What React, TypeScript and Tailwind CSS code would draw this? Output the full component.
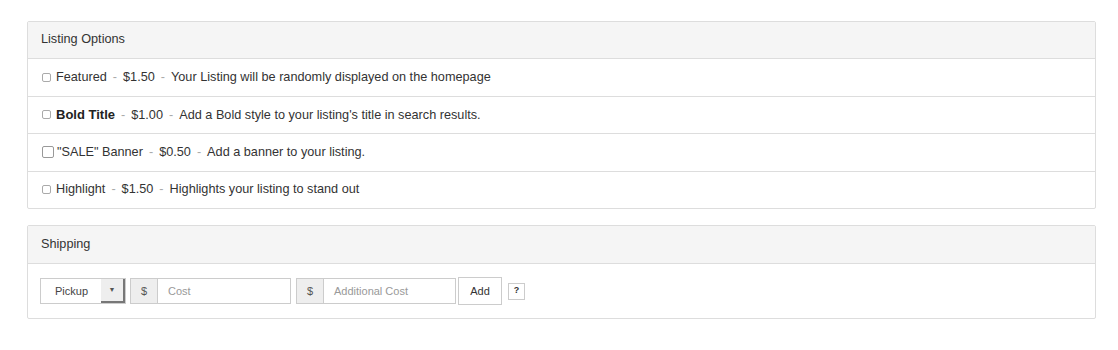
import React from "react";

const Sep = () => <span className="text-[#aaa] mx-[6px]">-</span>;

function Row({ children, big = false }: { children: React.ReactNode; big?: boolean }) {
  return (
    <div className="h-[37.5px] flex items-center px-[14px] border-t border-[#ddd]">
      <span
        className={
          big
            ? "w-[12px] h-[12px] border border-[#999] rounded-[2px] bg-white mr-[3px] shrink-0"
            : "w-[9px] h-[9px] border border-[#aaa] rounded-[2px] bg-white mr-[5px] shrink-0"
        }
      />
      <span className="whitespace-pre">{children}</span>
    </div>
  );
}

export default function App() {
  return (
    <div
      className="w-[1118px] h-[350px] bg-white text-[#333] text-[12.7px] pt-[21px] pl-[27px]"
      style={{ fontFamily: '"Liberation Sans", Arial, sans-serif' }}
    >
      <div className="w-[1069px] border border-[#ddd] rounded-[2px]">
        <div className="h-[36px] bg-[#f5f5f5] flex items-center px-[13px]">Listing Options</div>
        <Row>
          Featured<Sep />$1.50<Sep />Your Listing will be randomly displayed on the homepage
        </Row>
        <Row>
          <span className="font-bold text-[#222] text-[13px]">Bold Title</span>
          <Sep />$1.00<Sep />Add a Bold style to your listing's title in search results.
        </Row>
        <Row big>
          "SALE" Banner<Sep />$0.50<Sep />Add a banner to your listing.
        </Row>
        <Row>
          Highlight<Sep />$1.50<Sep />Highlights your listing to stand out
        </Row>
      </div>

      <div className="w-[1069px] mt-[16px] border border-[#ddd] rounded-[2px]">
        <div className="h-[38px] bg-[#f5f5f5] flex items-center px-[13px] border-b border-[#ddd]">
          Shipping
        </div>
        <div className="h-[54px] flex items-center px-[12px] text-[11px]">
          <div className="flex h-[26px] w-[86px] border border-[#ccc] bg-white">
            <div className="flex-1 flex items-center pl-[14px] text-[#444]">Pickup</div>
            <div className="w-[24px] bg-[#eee] border-r-2 border-b-2 border-[#777] flex items-center justify-center text-[7px] text-[#555]">
              ▼
            </div>
          </div>
          <div className="flex h-[26px] ml-[4px] border border-[#ccc]">
            <div className="w-[27px] bg-[#eee] border-r border-[#ccc] flex items-center justify-center text-[#555]">
              $
            </div>
            <div className="w-[132px] bg-white flex items-center pl-[10px] text-[#999]">Cost</div>
          </div>
          <div className="flex h-[26px] ml-[5px] border border-[#ccc]">
            <div className="w-[27px] bg-[#eee] border-r border-[#ccc] flex items-center justify-center text-[#555]">
              $
            </div>
            <div className="w-[131px] bg-white flex items-center pl-[10px] text-[#999]">Additional Cost</div>
          </div>
          <div className="h-[28px] w-[44px] ml-[2px] border border-[#ccc] bg-white flex items-center justify-center text-[#333]">
            Add
          </div>
          <div className="h-[17px] w-[17px] ml-[6px] border border-[#ccc] bg-white flex items-center justify-center text-[9px] font-bold text-[#333]">
            ?
          </div>
        </div>
      </div>
    </div>
  );
}
